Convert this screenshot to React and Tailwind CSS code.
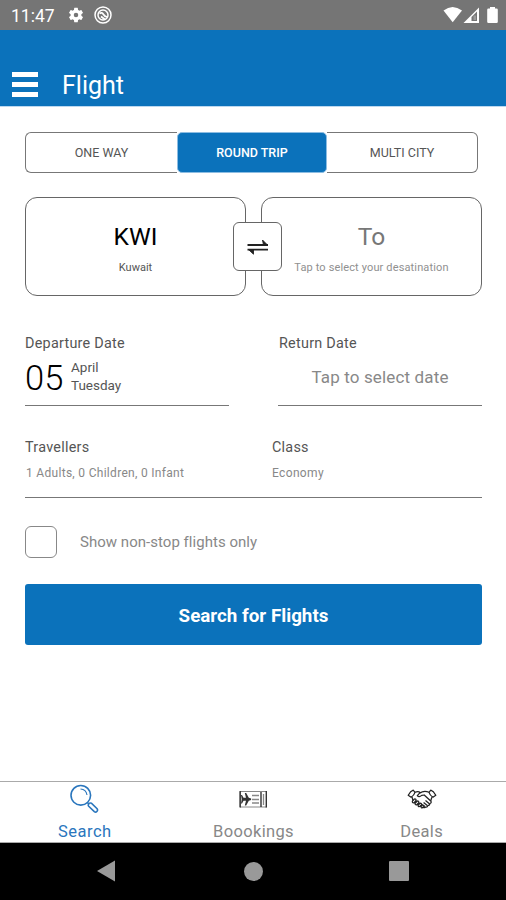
function StatusBar() {
  return (
    <div className="flex h-[30px] items-center bg-[#757575] text-white">
      <span className="ml-[11px] w-[56px] pt-[2px] text-[17.5px] leading-[28px]">11:47</span>
      <svg className="size-[18px]" viewBox="0 0 24 24" fill="currentColor">
        <path d="M19.14 12.94c.04-.3.06-.61.06-.94 0-.32-.02-.64-.07-.94l2.03-1.58a.49.49 0 0 0 .12-.61l-1.92-3.32a.49.49 0 0 0-.59-.22l-2.39.96c-.5-.38-1.03-.7-1.62-.94l-.36-2.54a.48.48 0 0 0-.48-.41h-3.84a.47.47 0 0 0-.47.41l-.36 2.54c-.59.24-1.13.57-1.62.94l-2.39-.96a.48.48 0 0 0-.59.22L2.74 8.87a.47.47 0 0 0 .12.61l2.03 1.58c-.05.3-.09.63-.09.94s.02.64.07.94l-2.03 1.58a.49.49 0 0 0-.12.61l1.92 3.32c.12.22.37.29.59.22l2.39-.96c.5.38 1.03.7 1.62.94l.36 2.54c.05.24.24.41.48.41h3.84c.24 0 .44-.17.47-.41l.36-2.54c.59-.24 1.13-.56 1.62-.94l2.39.96c.22.08.47 0 .59-.22l1.92-3.32a.47.47 0 0 0-.12-.61zM12 15a3 3 0 1 1 0-6 3 3 0 0 1 0 6z" />
      </svg>
      <svg className="ml-[9px] size-[18px]" viewBox="0 0 18 18" fill="none" stroke="currentColor">
        <circle cx="9" cy="9" r="8" strokeWidth="1.5" />
        <circle cx="9" cy="9" r="5" strokeWidth="1.5" />
        <path d="M5.5 7.5Q8 6 9.3 8.2T13 11M7 10.5l4 3" strokeWidth="1.7" />
      </svg>
      <svg className="mr-[7px] ml-auto h-[18px] w-[56px]" viewBox="0 0 56 18" fill="currentColor">
        <path d="M.5 4.4Q9.5-2.6 19 4.4L9.7 16.3z" />
        <path d="M20.5 17 36 1.5V17z" />
        <path d="M28.5 15v-4L34 5.5V15z" fill="#757575" />
        <path d="M30.5 9.5h2.5V14h-2.5z" fill="#9a9a9a" />
        <path d="M47 1h5v1.5h1.5q1.3 0 1.3 1.3v12q0 1.3-1.3 1.3h-8q-1.3 0-1.3-1.3v-12q0-1.3 1.3-1.3H47z" />
      </svg>
    </div>
  );
}

function Header() {
  return (
    <header className="flex h-[77px] items-end border-b border-[#bcd8f0] bg-[#0b72bb] text-white">
      <div className="mb-[9px] ml-[12px] flex w-[26px] flex-col gap-[5px]">
        <span className="h-[5px] bg-white" />
        <span className="h-[5px] bg-white" />
        <span className="h-[5px] bg-white" />
      </div>
      <h1 className="ml-[24px] text-[25px] leading-[41px]">Flight</h1>
    </header>
  );
}

function TripTabs() {
  return (
    <div className="flex h-[41px] w-[453px] text-[12.5px] leading-[40px] text-[#555]">
      <div className="w-[152px] rounded-l-[6px] border border-r-0 border-[#777] text-center">ONE WAY</div>
      <div className="w-[150px] rounded-[5px] border border-[#8dbde2] bg-[#0b72bb] text-center font-medium text-white">
        ROUND TRIP
      </div>
      <div className="w-[151px] rounded-r-[6px] border border-l-0 border-[#777] text-center">MULTI CITY</div>
    </div>
  );
}

function Airports() {
  return (
    <div className="relative mt-[24px] flex justify-between text-center">
      <div className="h-[99px] w-[221px] rounded-[12px] border border-[#666] pt-[24px]">
        <div className="text-[24.5px] leading-[30px] text-black">KWI</div>
        <div className="mt-[8px] text-[11px] leading-[16px] text-[#555]">Kuwait</div>
      </div>
      <div className="h-[99px] w-[221px] rounded-[12px] border border-[#666] pt-[24px]">
        <div className="text-[24.5px] leading-[30px] text-[#777]">To</div>
        <div className="mt-[8px] text-[11px] leading-[16px] tracking-[0.14px] text-[#909090]">
          Tap to select your desatination
        </div>
      </div>
      <div className="absolute top-[25px] left-[208px] flex size-[49px] items-center justify-center rounded-[6px] border border-[#666] bg-white">
        <svg className="h-[16px] w-[22px]" viewBox="0 0 22 16" fill="none" stroke="#222" strokeWidth="1.9">
          <path d="M.5 6H21M.5 10.6H21" />
          <path d="M15.5 1 20.5 6h-4zM1.5 10.6l5 4.6v-4.6z" fill="#222" strokeWidth="0.9" />
        </svg>
      </div>
    </div>
  );
}

function Dates() {
  return (
    <div className="mt-[38px] flex justify-between">
      <div className="h-[72px] w-[204px] border-b-[1.5px] border-[#777]">
        <div className="text-[14.4px] leading-[20px] tracking-[0.25px] text-[#555]">Departure Date</div>
        <div className="flex">
          <span className="w-[46px] text-[34.5px] leading-[48px] font-light text-black">05</span>
          <div className="pt-[4px] text-[13.5px] leading-[18px] text-[#555]">
            <div>April</div>
            <div>Tuesday</div>
          </div>
        </div>
      </div>
      <div className="h-[72px] w-[204px] border-b-[1.5px] border-[#777]">
        <div className="pl-px text-[14.4px] leading-[20px] tracking-[0.25px] text-[#555]">Return Date</div>
        <div className="text-center text-[17px] leading-[46px] tracking-[0.15px] text-[#888]">Tap to select date</div>
      </div>
    </div>
  );
}

function Passengers() {
  return (
    <div className="mt-[32px] flex h-[60px] border-b-[1.5px] border-[#777]">
      <div className="w-[247px]">
        <div className="text-[14.4px] leading-[20px] tracking-[0.25px] text-[#555]">Travellers</div>
        <div className="mt-[6px] pl-px text-[12px] leading-[18px] tracking-[0.3px] text-[#888]">1 Adults, 0 Children, 0 Infant</div>
      </div>
      <div>
        <div className="text-[14.4px] leading-[20px] tracking-[0.25px] text-[#555]">Class</div>
        <div className="mt-[6px] text-[12px] leading-[18px] tracking-[0.35px] text-[#888]">Economy</div>
      </div>
    </div>
  );
}

function BottomNav() {
  return (
    <nav className="flex h-[62px] justify-around border-y border-[#aaa] text-[16.5px] leading-[20px] text-[#888]">
      <div className="flex w-1/3 flex-col items-center text-[#2a76bd]">
        <svg className="mt-[2px] h-[30px] w-[30px]" viewBox="0 0 30 30" fill="none" stroke="currentColor" strokeWidth="1.6">
          <circle cx="11.8" cy="11.3" r="9.8" />
          <path d="M11.5 5q5.6.4 6.5 6" strokeWidth="1.1" />
          <path d="m18.5 18.7 1.6 1.6M19.5 20.6q.7-2.2 2.9-1.4l5.7 5.6q1 1.5-.2 2.7t-2.6.2l-5.6-5.4q-.8-.9-.2-1.7z" />
        </svg>
        <span className="mt-[8px] ml-[1px] tracking-[0.5px]">Search</span>
      </div>
      <div className="flex w-1/3 flex-col items-center">
        <svg className="mt-[8px] h-[19px] w-[30px]" viewBox="0 0 30 19" fill="none" stroke="#333">
          <path d="M2 1.5h26.5v15.5H2z" stroke="#888" />
          <path d="M2.2 1v16.5M23 2v15M28.3 1v16.500" strokeWidth="1.4" />
          <path d="M14 5.500H21M14 9.500H21M14 13H21M25.500 4v11" stroke="#888" strokeWidth="1.3" />
          <path d="M3 5h1l1.500 2.800H8L6.800 3H8.200L10.800 7.800l2.300.7v1.500l-2.300.7L8.200 15.500H6.800L8 10.700H5.500L4 13.500H3l.7-4.300z" fill="#333" stroke="none" />
        </svg>
        <span className="mt-[13px] ml-[1px] tracking-[0.35px]">Boookings</span>
      </div>
      <div className="flex w-1/3 flex-col items-center">
        <svg className="mt-[7px] h-[20px] w-[30px]" viewBox="0 0 30 20" fill="none" stroke="#222" strokeWidth="1.25" strokeLinejoin="round">
          <path d="M6.2 1.200Q3.600 2 1.200 6.200l2.900 2.100Q7 6.500 8 3.400zM23.800 1.200Q26.400 2 28.800 6.200l-2.900 2.100Q23 6.500 22 3.400z" />
          <path d="M8 3.300q3-1.500 5.300.1l-3 3.200q1.700 2.200 4.400-.2l2.500-.4 6.800 6.200q.7 2-1.300 2.300.2 2-2 2 0 1.800-2 1.500-1 1.400-3-.1M22 3.300q-3.600-1.600-6.700-.5l-2 1.300M5 8l1 3.600" />
          <path d="m7.400 10-2 2.200q-.4 1.900 1.600 1.600l2-2.300q.3-1.900-1.600-1.500zM10.300 12l-2.200 2.300q-.2 1.900 1.700 1.500l2-2.100q.2-1.900-1.500-1.700zM13 14.200l-1.900 2q-.1 1.800 1.700 1.300l1.800-1.800q.1-1.600-1.600-1.500zM15.500 16l-1.500 1.600q0 1.700 1.600 1l1.400-1.300M24.900 8.300l-1.200 3.400M18.500 11.500l3.900 3.200M16.600 13.500l3.700 3M15.200 15.500l2.800 2" />
        </svg>
        <span className="mt-[13px] tracking-[0.35px]">Deals</span>
      </div>
    </nav>
  );
}

function SystemBar() {
  return (
    <div className="flex h-[57px] items-start justify-between bg-black pt-[17px] pr-[97px] pl-[96px]">
      <svg className="size-[22px]" viewBox="0 0 22 22" fill="#999">
        <path d="M1 11 19 .5v21z" />
      </svg>
      <span className="mt-[2px] mr-[1px] size-[19px] rounded-full bg-[#999]" />
      <span className="mt-[1px] size-[20px] rounded-[1px] bg-[#999]" />
    </div>
  );
}

export default function App() {
  return (
    <div className="flex h-[900px] w-[506px] flex-col overflow-hidden bg-white font-[Roboto,sans-serif]">
      <StatusBar />
      <Header />
      <main className="flex-1 pt-[25px] pr-[24px] pl-[25px]">
        <TripTabs />
        <Airports />
        <Dates />
        <Passengers />
        <div className="mt-[28px] flex items-center">
          <span className="size-[32px] rounded-[6px] border border-[#888]" />
          <span className="ml-[23px] text-[15px] tracking-[0.03px] text-[#888]">Show non-stop flights only</span>
        </div>
        <button className="mt-[26px] h-[61px] w-full rounded-[3px] bg-[#0b72bb] pt-[4px] text-[18.8px] font-bold text-white">
          Search for Flights
        </button>
      </main>
      <BottomNav />
      <SystemBar />
    </div>
  );
}
